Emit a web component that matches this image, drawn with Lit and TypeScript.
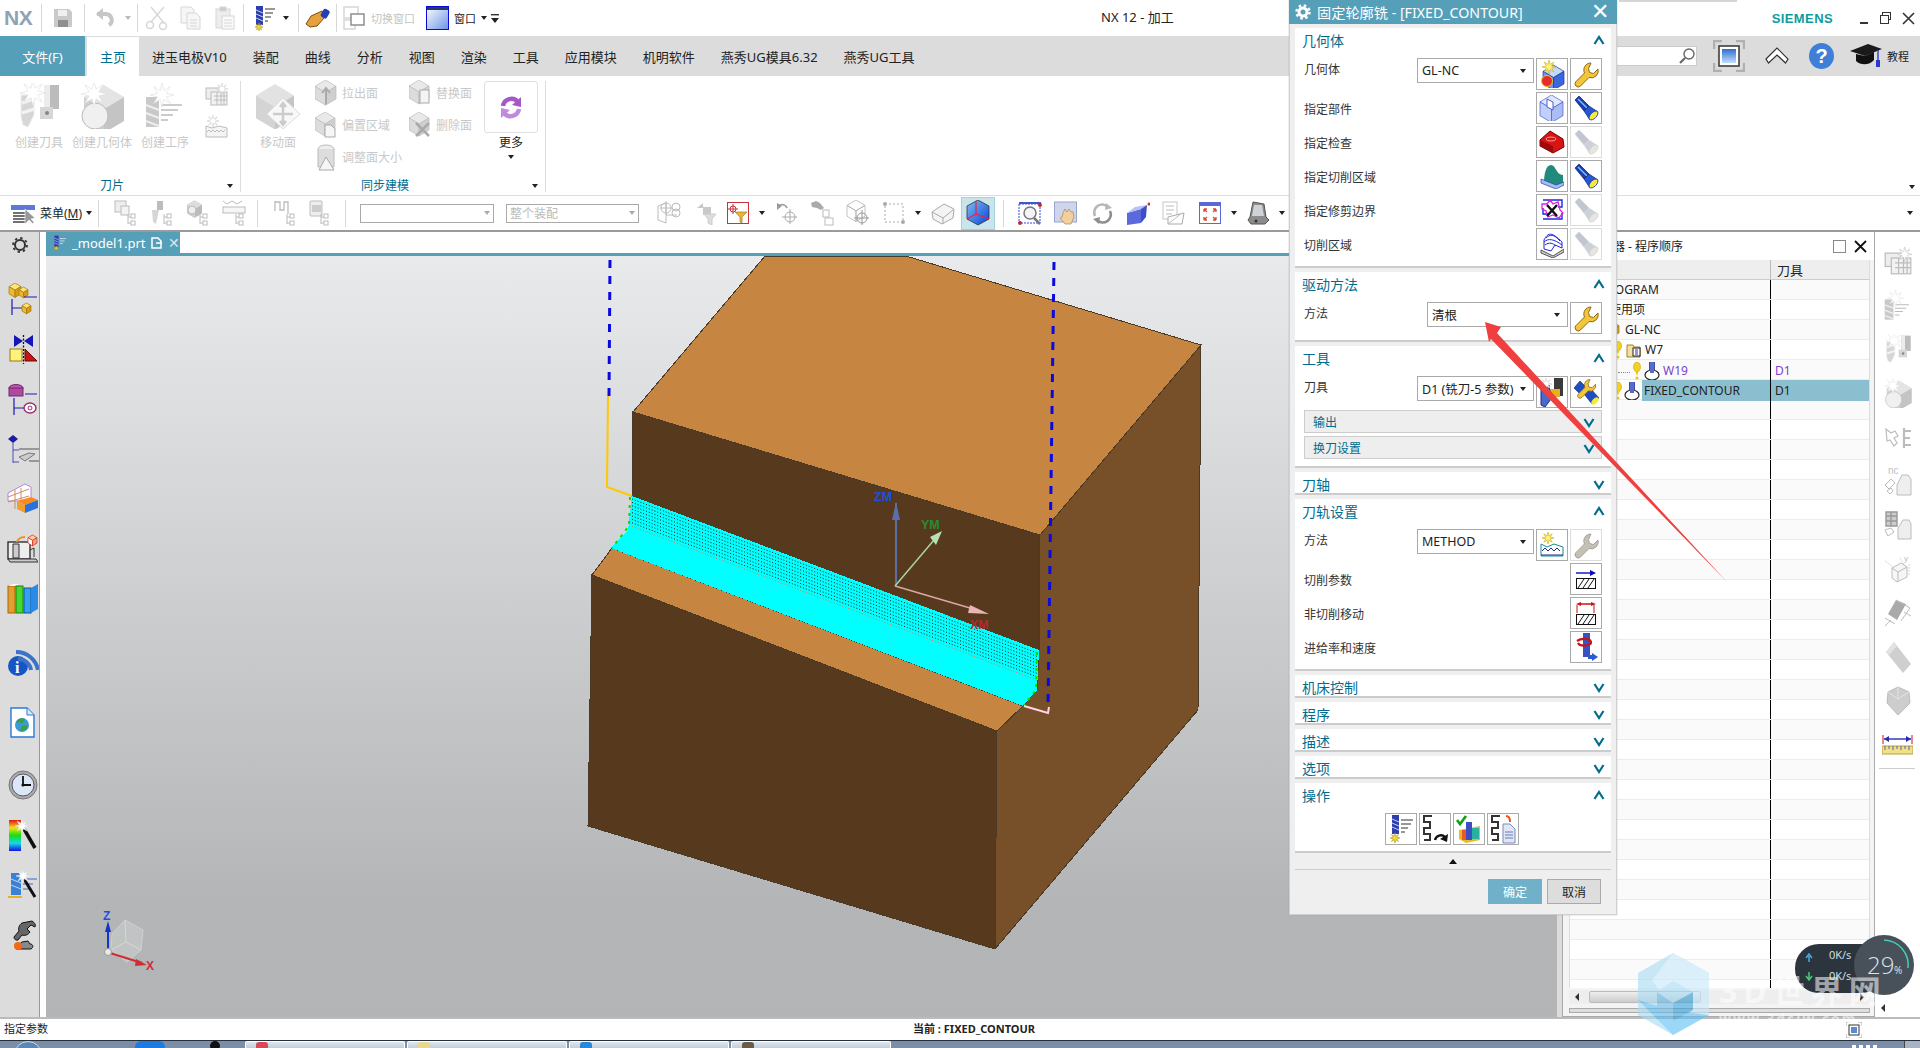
import { LitElement, html, svg, css } from "lit";
import { customElement } from "lit/decorators.js";

// small svg helpers, every icon is drawn in its own pixel box
const ic = (w: number, h: number, b: unknown) =>
  html`<svg width=${w} height=${h} viewBox="0 0 ${w} ${h}">${b}</svg>`;
const sc = (w: number, h: number, vw: number, vh: number, b: unknown) =>
  html`<svg width=${w} height=${h} viewBox="0 0 ${vw} ${vh}">${b}</svg>`;

const spark = (x: number, y: number, r: number, c = "#fff", st = "#ccc") => {
  const pts: string[] = [];
  for (let i = 0; i < 16; i++) {
    const a = (i * Math.PI) / 8;
    const q = i % 2 ? r * 0.4 : r;
    pts.push(`${(x + q * Math.cos(a)).toFixed(1)},${(y + q * Math.sin(a)).toFixed(1)}`);
  }
  return svg`<polygon points=${pts.join(" ")} fill=${c} stroke=${st} stroke-width="0.6"/>`;
};

const cube = (x: number, y: number, s: number, t: string, l: string, r: string, st = "none") => svg`
  <polygon points="${x},${y + s * 0.3} ${x + s * 0.5},${y} ${x + s},${y + s * 0.3} ${x + s * 0.5},${y + s * 0.6}" fill=${t} stroke=${st} stroke-width="0.7"/>
  <polygon points="${x},${y + s * 0.3} ${x + s * 0.5},${y + s * 0.6} ${x + s * 0.5},${y + s * 1.2} ${x},${y + s * 0.9}" fill=${l} stroke=${st} stroke-width="0.7"/>
  <polygon points="${x + s},${y + s * 0.3} ${x + s * 0.5},${y + s * 0.6} ${x + s * 0.5},${y + s * 1.2} ${x + s},${y + s * 0.9}" fill=${r} stroke=${st} stroke-width="0.7"/>`;

const G1 = "#d6d6d6";
const G2 = "#bcbcbc";
const G3 = "#ececec";

const wrenchPath = "M18 2a7 7 0 0 0-6.5 10L3 20.5a3 3 0 0 0 4.5 4.5L16 16.5a7 7 0 0 0 9-8.5l-4.5 4.5-4-1-1-4z";
const wrench = (on: boolean) =>
  ic(26, 27, svg`<path d=${wrenchPath} fill=${on ? "#f2c53d" : "#c4c0b6"} stroke=${on ? "#8c6a12" : "#a5a29a"} stroke-width="1"/>`);

const flash = (on: boolean) =>
  ic(26, 26, svg`
    <polygon points="2,5 6,1 16,11 11,16" fill=${on ? "#1a3cb4" : "#c2c6d0"} stroke=${on ? "#0a1f6a" : "#d0d3da"} stroke-width="0.7"/>
    ${on ? svg`<path d="M5 4l9 9" stroke="#7cc4f8" stroke-width="1.4"/>` : null}
    <polygon points="11,16 16,11 25,17 17,25" fill=${on ? "#2458d8" : "#ccd0d8"} stroke=${on ? "#0a1f6a" : "#d8dade"} stroke-width="0.7"/>
    <ellipse cx="20.5" cy="20.5" rx="5.5" ry="3" transform="rotate(-45 20.5 20.5)" fill=${on ? "#f4ea3c" : "#e6e6de"} stroke=${on ? "#1a3aa0" : "#d4d4d0"} stroke-width="0.8"/>`);

const millMark = (c = "#2d3fae") => svg`
  <rect x="4" y="1" width="7" height="19" fill=${c}/>
  <path d="M4 5l7 3M4 9l7 3M4 13l7 3" stroke="#c7d2f2" stroke-width="1"/>`;

const opIcon = ic(24, 26, svg`${millMark()}
  <path d="M13 4h10M13 8h8M13 12h6M13 16h3" stroke="#777" stroke-width="1.3"/>
  ${spark(7, 22, 4, "#f4dc3a", "#b09a20")}`);

const caret = html`<i class="car"></i>`;

const mkGhostTree = (b: unknown) =>
  ic(24, 26, svg`${b}
    <path d="M14 14v10M14 17h3M14 23h3" stroke=${G2} fill="none"/>
    <rect x="17" y="14" width="4" height="4" fill="none" stroke=${G2}/><rect x="17" y="21" width="4" height="4" fill="none" stroke=${G2}/>`);

const bTool = svg`
  <path d="M4 12h13v20l-6 12-5-2-2-8z" fill=${G1} stroke="#efefef"/><path d="M5 20l12-4M5 30l12-4" stroke="#f4f4f4" stroke-width="3"/>
  <rect x="27" y="2" width="15" height="24" fill=${G2}/><rect x="27" y="2" width="6" height="24" fill=${G3}/><rect x="23" y="24" width="13" height="12" fill=${G1}/><circle cx="30" cy="30" r="2" fill="#888"/>
  ${spark(16, 10, 13, "#fff", "#ddd")}`;
const bGeom = svg`${cube(6, 2, 40, "#e4e4e4", "#d0d0d0", "#c4c4c4")}<circle cx="17" cy="33" r="13" fill="#f0f0f0" stroke="#bbb"/>${spark(16, 11, 13, "#fff", "#ddd")}`;
const bOp = svg`
  <rect x="1" y="14" width="13" height="30" fill="#c9c9c9"/><path d="M1 22l13 5M1 30l13 5M1 38l13 5" stroke="#eee" stroke-width="2"/>
  <path d="M16 22h21M16 27h17M16 32h12M16 37h7" stroke=${G2} stroke-width="1.5"/>${spark(17, 12, 12, "#fff", "#ddd")}`;
const bSmallOp = svg`<rect x="1" y="5" width="13" height="11" fill="#eee" stroke=${G2}/><rect x="6" y="9" width="16" height="13" fill="#f2f2f2" stroke=${G2}/><path d="M9 13h13M9 17h13M12 9v13M16 9v13M19 9v13" stroke=${G2}/>${spark(17, 6, 6, "#fff", "#ccc")}`;

const I = {
  save: ic(20, 20, svg`<path d="M1 1h15l3 3v15H1z" fill="#c9c9c9"/><rect x="5" y="2" width="9" height="6" fill="#efefef"/><rect x="5" y="12" width="10" height="7" fill="#8f8f8f"/>`),
  undo: ic(20, 20, svg`<path d="M2 6h9a6 6 0 0 1 3 11" fill="none" stroke="#c6c6c6" stroke-width="4"/><path d="M8 0v12L1 6z" fill="#c6c6c6"/>`),
  cut: ic(23, 24, svg`<path d="M19 1L6 16M6 1l13 16" stroke=${G1} fill="none" stroke-width="1.3"/><circle cx="5" cy="19" r="3.5" fill="none" stroke=${G1} stroke-width="1.5"/><circle cx="18" cy="20" r="3.5" fill="none" stroke=${G1} stroke-width="1.5"/>`),
  copy: ic(21, 24, svg`<path d="M1 1h10l3 3v13H1z" fill="#f6f6f6" stroke=${G1}/><path d="M7 7h9l4 4v12H7z" fill="#f6f6f6" stroke=${G1}/><path d="M10 14h7M10 17h7M10 20h7" stroke=${G1}/>`),
  paste: ic(20, 24, svg`<rect x="1" y="3" width="14" height="19" fill="#ededed" stroke=${G1}/><rect x="5" y="1" width="6" height="4" fill="#ccc" stroke=${G1}/><rect x="7" y="10" width="12" height="13" fill="#fafafa" stroke=${G1}/><path d="M9 14h8M9 17h8M9 20h8" stroke=${G1}/>`),
  hand: ic(26, 20, svg`<path d="M1 16l5-8 11-5 3 6-8 9-7 1z" fill="#e6a040" stroke="#7a5010"/><rect x="17" y="1" width="7" height="9" rx="2" transform="rotate(30 20 5)" fill="#2440b8"/>`),
  sw: ic(22, 24, svg`<rect x="1" y="1" width="14" height="11" fill="#fff" stroke=${G1} stroke-width="1.5"/><rect x="1" y="14" width="11" height="9" fill="#fff" stroke=${G1} stroke-width="1.5"/><rect x="8" y="8" width="13" height="11" fill="#fff" stroke="#8e8e8e" stroke-width="1.5"/>`),
  win: ic(23, 24, svg`<defs><linearGradient id="wg" x1="0" y1="0" x2="1" y2="1"><stop offset="0" stop-color="#fff"/><stop offset="1" stop-color="#6b93e6"/></linearGradient></defs><rect x="0.5" y="0.5" width="22" height="23" fill="url(#wg)" stroke="#0a0ad8"/><rect x="1" y="1" width="21" height="3" fill="#2a3a5c"/>`),
  qa: ic(8, 9, svg`<rect x="0" y="0" width="8" height="1.4" fill="#333"/><polygon points="0,4 8,4 4,9" fill="#222"/>`),
  createTool: ic(44, 46, bTool),
  createGeom: ic(48, 46, bGeom),
  createOp: ic(40, 46, bOp),
  smallOp: ic(23, 23, bSmallOp),
  smallMethod: ic(23, 23, svg`<path d="M1 11l6 2 7-2 8 2v9H1z" fill="#f4f4f4" stroke=${G2}/><path d="M2 17l2-2 2 2 2-2 2 2 2-2 2 2 2-2 2 2 2-2" stroke=${G2} fill="none"/>${spark(8, 6, 6, "#fff", "#ccc")}`),
  move: ic(44, 46, svg`${cube(0, 1, 38, "#e2e2e2", "#d4d4d4", "#c6c6c6")}<polygon points="27,15 44,31 27,46 11,31" fill="#f8f8f8" stroke="#ddd"/><path d="M27 20v22M17 31h20M24 24l3-4 3 4M24 38l3 4 3-4" stroke="#ccc" stroke-width="2.5" fill="none"/>`),
  pull: ic(22, 26, svg`${cube(0, 0, 21, "#e9e9e9", "#dcdcdc", "#cfcfcf", "#bbb")}<path d="M11 24V9M7 13l4-5 4 5" stroke="#aaa" stroke-width="2" fill="none"/>`),
  offset: ic(22, 26, svg`${cube(0, 0, 20, "#e9e9e9", "#dcdcdc", "#cfcfcf", "#bbb")}<path d="M10 13h6l4 4v8h-10z" fill="#f6f6f6" stroke="#aaa"/>`),
  resize: ic(20, 27, svg`<ellipse cx="10" cy="5" rx="8" ry="4" fill="#eee" stroke="#bbb"/><path d="M2 5v18h16V5" fill="#ddd" stroke="#bbb"/><polygon points="10,13 18,26 3,26" fill="#f6f6f6" stroke="#aaa"/>`),
  replace: ic(22, 26, svg`${cube(0, 0, 20, "#e9e9e9", "#dcdcdc", "#cfcfcf", "#bbb")}<rect x="11" y="10" width="9" height="13" fill="#f4f4f4" stroke="#aaa"/>`),
  del: ic(22, 26, svg`${cube(0, 0, 20, "#e9e9e9", "#dcdcdc", "#cfcfcf", "#bbb")}<path d="M7 11l13 13M20 11L7 24" stroke="#aaa" stroke-width="2.5"/>`),
  more: ic(22, 23, svg`<path d="M3 10a8.5 8.5 0 0 1 15-4" fill="none" stroke="#a658c8" stroke-width="4.5"/><polygon points="21,1 21,11 12,9" fill="#a658c8"/><path d="M19 13a8.5 8.5 0 0 1-15 4" fill="none" stroke="#c08adf" stroke-width="4.5"/><polygon points="1,22 1,12 10,14" fill="#c08adf"/>`),
  menu: ic(25, 22, svg`<rect x="0" y="3" width="24" height="5" fill="#5f79d8"/><path d="M2 11h16M2 14h14M2 17h14M2 20h14" stroke="#444" stroke-width="1.3"/><polygon points="14,7 14,22 18,18 22,22 23,20 20,17 24,16" fill="#999" stroke="#fff" stroke-width="0.6"/>`),
  t1: mkGhostTree(svg`<rect x="1" y="1" width="11" height="11" fill="#eee" stroke=${G2}/><rect x="7" y="6" width="8" height="9" fill="#f4f4f4" stroke=${G2}/>`),
  t2: mkGhostTree(svg`<rect x="7" y="1" width="6" height="9" fill=${G2}/><path d="M2 10l7 0-3 14-3-2z" fill=${G1}/>`),
  t3: mkGhostTree(svg`${cube(1, 0, 15, "#ddd", "#ccc", "#bbb")}<circle cx="6" cy="10" r="4" fill="#eee" stroke="#bbb"/>`),
  t4: mkGhostTree(svg`<path d="M1 1l4 3 5-3 5 3 5-3" fill="none" stroke=${G2}/><rect x="1" y="7" width="22" height="6" fill="#f6f6f6" stroke=${G2}/>`),
  t5: mkGhostTree(svg`<path d="M2 1v10M2 2h5v8h4V2h4v12" fill="none" stroke=${G2} stroke-width="1.3"/>`),
  t6: mkGhostTree(svg`<rect x="3" y="1" width="12" height="15" rx="1" fill="#eee" stroke=${G2}/><rect x="5" y="5" width="9" height="7" fill="#ccc"/>`),
  m1: ic(25, 26, svg`<path d="M1 6l8-3v20l-8-3z M9 15h11" fill="none" stroke=${G2}/><circle cx="9" cy="8" r="5" fill="none" stroke=${G2}/><circle cx="19" cy="7" r="4" fill="none" stroke=${G2}/><circle cx="19" cy="13" r="4" fill="none" stroke=${G2}/><path d="M9 1v14M3 8h12" stroke=${G2}/>`),
  m2: ic(23, 24, svg`<path d="M3 7l6-5v4h8v8H9V7z" fill="#c8c8c8"/><polygon points="10,13 22,13 18,18 18,24 14,22 14,18" fill="#ddd" stroke="#ccc"/>`),
  filter: ic(22, 22, svg`<rect x="0.5" y="0.5" width="21" height="21" fill="#fff" stroke="#c8333d"/><circle cx="6" cy="7" r="3" fill="none" stroke="#c8333d"/><path d="M6 2v10M1 7h10" stroke="#c8333d"/><polygon points="8,10 20,10 15,15 15,21 13,20 13,15" fill="#e8b43a" stroke="#9a7414" stroke-width="0.6"/>`),
  orient: ic(21, 24, svg`<path d="M2 6a5 5 0 0 1 9 1" fill="none" stroke="#999" stroke-width="1.5"/><polygon points="1,2 6,5 1,9" fill="#999"/><circle cx="14" cy="16" r="5" fill="none" stroke="#aaa"/><path d="M14 8v15M6 16h15" stroke="#aaa"/>`),
  tree7: ic(24, 26, svg`<path d="M1 3l5-2 4 2 4 5-3 2-4-2-5-1z" fill="#aaa"/><rect x="13" y="10" width="6" height="7" fill="none" stroke=${G2}/><rect x="15" y="18" width="8" height="7" fill="none" stroke=${G2}/>`),
  boxCross: ic(24, 26, svg`${cube(1, 0, 18, "none", "none", "none", "#aaa")}<circle cx="16" cy="18" r="5" fill="none" stroke="#999"/><path d="M16 10v15M8 18h15" stroke="#999"/>`),
  dashRect: ic(22, 22, svg`<rect x="2" y="2" width="18" height="18" fill="none" stroke="#aaa" stroke-dasharray="2 2"/><circle cx="2" cy="2" r="2" fill="#aaa"/><circle cx="20" cy="20" r="2" fill="#aaa"/>`),
  boxGrey: ic(24, 24, svg`<polygon points="1,11 13,3 23,8 22,17 11,23 2,18" fill="#f4f4f4" stroke="#aaa"/><path d="M1 11l11 6 10-8M12 17v6" fill="none" stroke="#aaa"/>`),
  wcs: ic(24, 26, svg`<defs><linearGradient id="bc" x1="0" y1="0" x2="1" y2="1"><stop offset="0" stop-color="#7cc0f4"/><stop offset="1" stop-color="#0b44d6"/></linearGradient></defs>
    <polygon points="1,6 12,0 23,6 23,19 12,25 1,19" fill="url(#bc)" stroke="#333" stroke-width="0.8"/><path d="M10 1v13l13 5M10 14l-9 5" fill="none" stroke="#e8224a" stroke-width="1.2"/>`),
  fit: ic(24, 24, svg`<rect x="1" y="1" width="22" height="4" fill="#4458c8"/><rect x="1" y="3" width="21" height="19" fill="#fff" stroke="#3a46e0" stroke-dasharray="2 1"/><circle cx="12" cy="12" r="6" fill="#f2f4f8" stroke="#777" stroke-width="1.5"/><path d="M16 17l6 6" stroke="#777" stroke-width="2.5"/><circle cx="2" cy="22" r="2" fill="#c82a2a"/><circle cx="22" cy="4" r="2" fill="#c82a2a"/>`),
  pan: ic(24, 25, svg`<rect x="0.5" y="1" width="22" height="20" fill="#cfd6ec" stroke="#9aa6cc"/><path d="M9 12l2-4 2 3 2-3 2 3 2 0 1 5-3 7h-6l-5-6 2-1z" fill="#f2cf9c" stroke="#9a7a4a" stroke-width="0.6"/>`),
  rotate: ic(23, 23, svg`<path d="M4 14a8 8 0 0 1 13-9" fill="none" stroke="#b8b8b8" stroke-width="2.6"/><path d="M19 9a8 8 0 0 1-13 9" fill="none" stroke="#8e8e8e" stroke-width="2.6"/><polygon points="15,1 21,6 14,8" fill="#b8b8b8"/><polygon points="8,22 2,17 9,15" fill="#8e8e8e"/>`),
  persp: ic(24, 24, svg`<polygon points="1,12 15,8 15,22 1,24" fill="#5a6adc"/><polygon points="1,12 9,6 21,4 15,8" fill="#b6c2f4"/><polygon points="15,8 21,4 20,16 15,22" fill="#3f4ec6"/><circle cx="23" cy="3" r="1.5" fill="#d42a2a"/>`),
  layers: ic(25, 24, svg`<rect x="1" y="1" width="14" height="17" fill="#fff" stroke="#c6c6c6"/><path d="M4 5h8M4 9h8M4 13h6" stroke="#bbb"/><polygon points="6,16 22,12 20,23 6,23" fill="#fff" stroke="#aaa"/><path d="M6 23l14-11" stroke="#bbb"/>`),
  full: ic(22, 22, svg`<rect x="0.5" y="0.5" width="21" height="21" fill="#fff" stroke="#5a68d8"/><rect x="1" y="1" width="20" height="3" fill="#5a68d8"/><path d="M5 7l3 3M5 7h3M5 7v3M17 7l-3 3M17 7h-3M17 7v3M5 18l3-3M5 18h3M5 18v-3M17 18l-3-3M17 18h-3M17 18v-3" stroke="#d84a30" stroke-width="1.3"/>`),
  shade: ic(22, 24, svg`<path d="M6 1l11 2 2 13 3 3-4 4H4l-3-4 2-3z" fill="#8c8c8c" stroke="#555"/><path d="M7 4h8l2 11H5z" fill="#cfd2d6"/><circle cx="9" cy="20" r="1.5" fill="#333"/>`),
  gear: ic(18, 18, svg`<circle cx="9" cy="9" r="5" fill="none" stroke="#333" stroke-width="2"/><circle cx="9" cy="9" r="7" fill="none" stroke="#333" stroke-width="1.8" stroke-dasharray="2.4 3.1"/>`),
  gearW: ic(16, 16, svg`<circle cx="8" cy="8" r="4" fill="none" stroke="#fff" stroke-width="3"/><circle cx="8" cy="8" r="6.5" fill="none" stroke="#fff" stroke-width="2.5" stroke-dasharray="2.5 2.6"/>`),
  lb1: ic(30, 32, svg`${cube(1, 0, 12, "#ffe27a", "#f0b92a", "#d89a12", "#a07810")}${cube(11, 4, 9, "#ffe27a", "#f0b92a", "#d89a12", "#a07810")}<path d="M4 16v16M4 25h10M16 14h13" stroke="#1a1ab4" stroke-width="1.2"/>${cube(14, 20, 9, "#ffe27a", "#f0b92a", "#d89a12", "#a07810")}`),
  lb2: ic(28, 30, svg`<polygon points="5,1 14,7 5,13" fill="#1416b8"/><polygon points="24,1 15,7 24,13" fill="#1416b8"/><path d="M14.5 1v29" stroke="#111" stroke-dasharray="2 1.5" stroke-width="1.3"/><rect x="1" y="15" width="12" height="12" fill="#fff27a" stroke="#9a7a10"/><polygon points="16,15 28,27 16,27" fill="#c81414" stroke="#6a0a0a"/>`),
  lb3: ic(30, 31, svg`<ellipse cx="8" cy="4" rx="7" ry="3.5" fill="#c94fb0" stroke="#6a2a70"/><rect x="1" y="4" width="14" height="8" fill="#b04aa0" stroke="#6a2a70"/><path d="M6 14v17M6 24h10M17 10h12" stroke="#1a1ab4" stroke-width="1.2"/><ellipse cx="22" cy="24" rx="6" ry="5" fill="#fff" stroke="#9a2a72" stroke-width="1.4"/><circle cx="22" cy="24" r="2" fill="none" stroke="#9a2a72"/>`),
  lb4: ic(32, 30, svg`<polygon points="6,1 11,5 6,9 1,5" fill="#1c1ca0"/><path d="M6 9v20M6 16h6M6 28h6" stroke="#5050b0"/><path d="M12 15h20M22 27h10" stroke="#555"/><path d="M12 23l10-4 6 1-10 7z" fill="#ccc" stroke="#777"/>`),
  lb5: ic(32, 32, svg`<path d="M1 10L18 1l6 3v14H1z" fill="#fff" stroke="#b08ad8"/><path d="M1 14l21-8M1 19l21-6M8 7v19M14 5v14" stroke="#d08a6a"/><polygon points="10,18 24,14 31,17 18,22" fill="#f88a20"/><polygon points="10,18 18,22 18,30 10,26" fill="#f0a030"/><polygon points="18,22 31,17 31,25 18,30" fill="#2a72d8"/>`),
  lb6: ic(31, 30, svg`<rect x="1" y="8" width="22" height="17" fill="#eee" stroke="#222" stroke-width="1.3"/><path d="M6 10h6v14H6zM1 25h28l2 3H3z" fill="#ccc" stroke="#333"/><path d="M23 16l4-2v9" stroke="#333" fill="none"/><path d="M10 8a8 6 0 0 1 8-5" stroke="#f28a20" stroke-width="2" fill="none"/>${cube(21, 1, 9, "#ffd0a0", "#fff", "#f4a080", "#d82a1a")}`),
  lb7: ic(32, 30, svg`<rect x="1" y="2" width="7" height="27" fill="#e0a030" stroke="#b06010"/><polygon points="1,2 6,0 12,0 8,2" fill="#fff"/><rect x="9" y="2" width="7" height="27" fill="#44d830" stroke="#1a8010"/><rect x="17" y="4" width="7" height="25" fill="#38a0f0" stroke="#1050a0"/><polygon points="24,4 31,0 31,25 24,29" fill="#2a8ae8"/>`),
  lb8: ic(32, 33, svg`<ellipse cx="11" cy="22" rx="10" ry="10" fill="#1556c4"/><text x="8" y="29" font-size="16" font-weight="700" fill="#fff" font-family="Liberation Serif">i</text><path d="M9 8a22 22 0 0 1 22 18" stroke="#3b73c8" stroke-width="4" fill="none"/><path d="M11 15a13 13 0 0 1 13 11" stroke="#3b73c8" stroke-width="4" fill="none"/>`),
  lb9: ic(25, 31, svg`<path d="M1 1h16l7 7v22H1z" fill="#fff" stroke="#2a7ad8" stroke-width="1.4"/><path d="M17 1v7h7" fill="#d8e8f8" stroke="#2a7ad8"/><circle cx="12" cy="18" r="7" fill="#3c9ad4"/><path d="M6 15a7 7 0 0 1 9-3l-2 4zM18 18a7 7 0 0 1-8 6l2-5z" fill="#38a048"/>`),
  lb10: ic(30, 30, svg`<circle cx="15" cy="15" r="14" fill="#aaa" stroke="#777"/><circle cx="15" cy="15" r="11" fill="#dbe6f6" stroke="#556"/><path d="M15 6v9h8" stroke="#111" stroke-width="1.8" fill="none"/><circle cx="15" cy="15" r="1.6" fill="#111"/>`),
  lb11: ic(30, 32, svg`<defs><linearGradient id="rb" x1="0" y1="0" x2="0" y2="1"><stop offset="0" stop-color="#e01414"/><stop offset="0.25" stop-color="#f4e014"/><stop offset="0.5" stop-color="#14e014"/><stop offset="0.75" stop-color="#14d8e8"/><stop offset="1" stop-color="#1414e0"/></linearGradient></defs><rect x="1" y="1" width="12" height="31" fill="url(#rb)"/><path d="M16 10l11 19" stroke="#111" stroke-width="3.5"/>${spark(14, 7, 7, "#fff", "#ddd")}`),
  lb12: ic(32, 28, svg`<rect x="4" y="2" width="10" height="22" fill="#3a82d8"/><path d="M4 8l10 4M4 14l10 4" stroke="#bcd6f4"/><path d="M16 8h14M16 13h10M16 18h6" stroke="#3a6ac0" stroke-width="1.2"/><path d="M17 8l11 18" stroke="#111" stroke-width="3"/>${spark(16, 5, 7, "#fff", "#ddd")}<path d="M1 26h14" stroke="#e8b020" stroke-width="2"/>`),
  lb13: ic(30, 31, svg`<path d="M24 1c3 2 4 4 3 6l-4-2-4 4 3 3c-2 3-5 4-8 3l-4 5a3 3 0 0 1-4-3l5-6c-1-3 0-6 3-8z" fill="#666" stroke="#111"/><path d="M14 22l6-1 2 3c3 0 4 3 1 5H8l1-3z" fill="#888" stroke="#111"/><circle cx="10" cy="26" r="4" fill="#f26a14"/>`),
  geomBtn: ic(26, 28, svg`${cube(4, 5, 21, "#c6d8fa", "#6a98ec", "#3a68dc", "#1a3a90")}<circle cx="8" cy="21" r="5.5" fill="#e82a2a" stroke="#e8c020"/>${spark(10, 7, 7, "#fff27a", "#c8a818")}`),
  part: ic(26, 26, svg`${cube(1, 0, 23, "#e0e8ff", "#c0cffb", "#a9bcf4", "#4a5ad0")}<path d="M8 4l6 3v8l-6-3z" fill="#fff" stroke="#4a5ad0"/>`),
  check: ic(26, 24, svg`<polygon points="1,10 11,1 24,9 25,17 14,23 1,16" fill="#d81414" stroke="#6a0808"/><polygon points="1,10 14,16 14,23 1,16" fill="#a00a0a"/><ellipse cx="12" cy="9" rx="5" ry="2" fill="none" stroke="#ff9a9a"/>`),
  cutArea: ic(24, 26, svg`<path d="M4 20c0-9 2-18 7-18s5 10 12 10v10l-7 3z" fill="#208a7c"/><path d="M1 16l15 6 8-3v3l-8 4-15-6z" fill="#a8bcf4" stroke="#2a3ea8" stroke-width="0.7"/>`),
  trim: ic(24, 26, svg`<path d="M3 3h19v7h-4M3 22h19v-6M3 11v6h6" fill="none" stroke="#1c2ad8" stroke-width="1.4"/><path d="M2 7h5l3-4 3 4 5-2 2 8 3 3-4 5-6-3-5 2-2-6-4-2z" fill="none" stroke="#e21ce2" stroke-width="1.3"/><path d="M7 8l10 11M17 8L7 19" stroke="#111" stroke-width="2.4"/>`),
  cutRegion: ic(24, 28, svg`<path d="M4 10c4-8 8-8 18 2v6l-7-3-4 6-7-2z" fill="#fff" stroke="#2424d8"/><path d="M6 8c4-4 8-4 14 3M4 12c4-4 10-3 18 3M5 15c4-3 8-2 11 1" stroke="#2424d8" fill="none"/><polygon points="1,20 13,26 24,19 24,22 13,28 1,23" fill="#ccc" stroke="#555"/>`),
  tool: ic(26, 30, svg`<rect x="15" y="1" width="9" height="18" fill="#3a3a3a"/><rect x="10" y="12" width="11" height="8" fill="#e8b020"/><path d="M2 8h8l2 14-6 8-4-2z" fill="#4a6ac8" stroke="#1a2a80"/>${spark(7, 7, 6, "#fff", "#ccc")}`),
  toolEdit: ic(28, 28, svg`<polygon points="2,10 8,3 14,9 7,15" fill="#1d4fc4" stroke="#0a1f6a" stroke-width="0.6"/><polygon points="12,16 18,10 27,20 20,26" fill="#1d4fc4" stroke="#0a1f6a" stroke-width="0.6"/><ellipse cx="23" cy="23" rx="4.5" ry="2.6" transform="rotate(-45 23 23)" fill="#f4ea3c"/><g transform="translate(4 0) scale(0.78)"><path d=${wrenchPath} fill="#f2c53d" stroke="#8c6a12"/></g>`),
  method: ic(26, 26, svg`<path d="M2 12l6 3 7-3 9 3v9H2z" fill="#fff" stroke="#1a8a9a"/><path d="M3 19l3-3 3 3 3-3 3 3 3-3 3 3" stroke="#1a2a80" fill="none"/><path d="M2 23h22" stroke="#1a2a80"/>${spark(9, 6, 6, "#fff27a", "#c8a818")}`),
  cutParam: ic(20, 20, svg`<path d="M0 4h18" stroke="#0a0ac0" stroke-width="1.4"/><polygon points="14,1 20,4 14,7" fill="#0a0ac0"/><rect x="0.5" y="9.5" width="19" height="10" fill="#fff" stroke="#111"/><path d="M2 19l6-9M7 19l6-9M12 19l6-9" stroke="#111"/>`),
  noCut: ic(20, 24, svg`<path d="M3 3h14" stroke="#c81414" stroke-width="1.5"/><polygon points="0,3 5,1 5,5" fill="#c81414"/><polygon points="20,3 15,1 15,5" fill="#c81414"/><path d="M1 4v8M18 4v8" stroke="#c81414"/><rect x="0.5" y="13.5" width="19" height="10" fill="#fff" stroke="#111"/><path d="M2 23l6-9M7 23l6-9M12 23l6-9" stroke="#111"/>`),
  feed: ic(24, 28, svg`<rect x="9" y="0" width="7" height="24" fill="#3a50c0"/><path d="M3 8c4-3 13-3 14 1s-11 5-13 1" fill="none" stroke="#c81414" stroke-width="2.2"/><path d="M14 24h6" stroke="#2a5ad8" stroke-width="4"/><polygon points="18,20 24,24 18,28" fill="#2a5ad8"/>`),
  gen: ic(26, 30, svg`${millMark()}<path d="M13 6h12M13 10h10M13 14h7M13 18h4" stroke="#777" stroke-width="1.3"/>${spark(7, 24, 5, "#f4dc3a", "#b09a20")}`),
  replay: ic(28, 30, svg`<path d="M11 2H3v6h6v6H3v6h6v6H3" fill="none" stroke="#333" stroke-width="2"/><path d="M14 26a6 6 0 0 1 10-3" fill="none" stroke="#111" stroke-width="2.4"/><polygon points="27,20 26,28 19,25" fill="#111"/>`),
  verify: ic(26, 30, svg`<polygon points="3,16 24,12 24,26 10,29 3,25" fill="#f0b820"/><rect x="10" y="8" width="6" height="18" fill="#3a50c0"/><rect x="16" y="14" width="7" height="11" fill="#28b0a0"/><rect x="6" y="16" width="4" height="10" fill="#e85a2a"/><path d="M1 6l3 4 6-8" stroke="#10a010" stroke-width="2.6" fill="none"/>`),
  list: ic(28, 30, svg`<path d="M11 2H3v6h6v6H3v6h6v6H3" fill="none" stroke="#333" stroke-width="2"/><path d="M14 10h7l5 5v14H14z" fill="#dfe6f6" stroke="#7a8ab8"/><path d="M16 18h8M16 21h8M16 24h8" stroke="#6a7ab0"/><path d="M17 2c3 0 4 3 4 6" stroke="#e8501a" stroke-width="2" fill="none"/>`),
  r1: sc(28, 28, 23, 23, bSmallOp),
  r2: sc(27, 31, 40, 46, bOp),
  r3: sc(28, 30, 44, 46, bTool),
  r4: sc(30, 29, 48, 46, bGeom),
  r5: ic(28, 25, svg`<path d="M2 4l5 4 4-2 3 5-4 2 3 5-3 3-4-6-3 1z" fill="none" stroke=${G2} stroke-width="1.2"/><path d="M20 3v20M20 6h7M20 13h6M20 20h7" stroke=${G2} stroke-width="2.2"/>`),
  r6: ic(28, 32, svg`<text x="4" y="9" font-size="10" fill="#c2c2c2" font-family="Liberation Sans">nc</text><path d="M1 20l6-6 4 4-6 6zM3 26l4-3 2 3-3 3z" fill="none" stroke=${G2}/><path d="M13 30V20l5-10h6l3 4v16z" fill="#eee" stroke=${G2}/>`),
  r7: ic(28, 30, svg`<path d="M2 2h11v14H2zM2 6h11M2 11h11M7 2v14" fill="#ccc" stroke="#999" stroke-width="1.4"/><path d="M1 20l6-2 3 4-6 4z" fill="none" stroke=${G2}/><path d="M14 29V18l5-8h6l2 4v15z" fill="#eee" stroke=${G2}/>`),
  r8: ic(28, 30, svg`<polygon points="8,14 17,9 23,13 23,23 13,28 8,24" fill="#f6f6f6" stroke=${G2}/><path d="M8 14l6 4 9-5M14 18v10" fill="none" stroke=${G2}/><path d="M1 7l8 6M16 4l4 6M25 10v12" stroke=${G1} stroke-dasharray="2 1"/><text x="20" y="7" font-size="8" fill="#bbb" font-family="Liberation Sans">y</text>`),
  r9: ic(28, 30, svg`<polygon points="4,16 12,2 22,6 13,22" fill="#aaa"/><path d="M12 2l14 8-9 13" fill="none" stroke=${G2}/><path d="M1 20l10 6M1 28l6-6M20 14l7 4" stroke=${G2}/>`),
  r10: ic(28, 34, svg`<polygon points="2,12 10,2 27,24 19,33" fill="#cfcfcf"/><polygon points="2,12 10,2 13,6 5,15" fill="#e2e2e2"/>`),
  r11: ic(26, 30, svg`<polygon points="13,1 24,6 25,17 13,29 2,17 3,6" fill="#cdcdcd" stroke="#bcbcbc"/><path d="M13 1v12M3 6l10 7 11-7" stroke="#e4e4e4" fill="none"/>`),
  ruler: ic(31, 20, svg`<path d="M1 0v9M30 0v9" stroke="#c81414"/><path d="M2 4h27" stroke="#2a2ab4" stroke-width="1.4"/><polygon points="2,4 7,1 7,7" fill="#2a2ab4"/><polygon points="29,4 24,1 24,7" fill="#2a2ab4"/><rect x="0" y="11" width="31" height="8" fill="#f0e08a" stroke="#b8a040"/><path d="M3 11v4M7 11v3M11 11v4M15 11v3M19 11v4M23 11v3M27 11v4" stroke="#6060a0"/>`),
  mag: ic(16, 16, svg`<circle cx="10" cy="6" r="5" fill="none" stroke="#666" stroke-width="1.4"/><path d="M6 10l-5 5" stroke="#666" stroke-width="2.2"/>`),
  fullscreen: ic(32, 32, svg`<path d="M1 9V1h8M23 1h8v8M31 23v8h-8M9 31H1v-8" fill="none" stroke="#b0b0b0" stroke-width="2.4"/><rect x="6" y="6" width="20" height="20" fill="#fff" stroke="#333" stroke-width="1.5"/><defs><linearGradient id="fs" x1="0" y1="0" x2="0" y2="1"><stop offset="0" stop-color="#2f6fd0"/><stop offset="1" stop-color="#bfe0fa"/></linearGradient></defs><rect x="9" y="9" width="14" height="14" fill="url(#fs)"/>`),
  chevUp: ic(26, 20, svg`<path d="M2 13L13 2l11 11-2.5 4L13 9l-8.5 8z" fill="#fff" stroke="#333" stroke-width="1.2"/>`),
  help: ic(25, 26, svg`<ellipse cx="12.5" cy="13" rx="12.5" ry="13" fill="#3f7fd8"/><text x="12.5" y="20" font-size="20" font-weight="700" text-anchor="middle" fill="#fff" font-family="Liberation Sans">?</text>`),
  cap: ic(32, 24, svg`<polygon points="0,7 18,0 32,5 15,12" fill="#1a1a1a"/><path d="M6 10v7c5 5 14 4 18-1V8l-9 4z" fill="#111"/><path d="M28 6v12" stroke="#2a3ad0" stroke-width="1.4"/><rect x="26" y="16" width="4" height="7" fill="#2a3ad0"/>`),
  folder: ic(15, 16, svg`<path d="M1 3h6l1 2h6v10H1z" fill="#f4e0a0" stroke="#a08030"/><rect x="7" y="6" width="7" height="8" fill="#fff" stroke="#222"/><path d="M9 8h3M9 10h3M9 12h3" stroke="#2a2ad0"/>`),
  excl: ic(8, 18, svg`<ellipse cx="4" cy="5" rx="3.5" ry="5" fill="#f2d21a" stroke="#b89a10" stroke-width="0.5"/><path d="M2.5 9l1.5 5 1.5-5z" fill="#e8c418"/><circle cx="4" cy="16" r="1.5" fill="#e8c418"/>`),
  opTree: ic(16, 18, svg`<rect x="5" y="0" width="6" height="9" fill="#3a50b0"/><path d="M1 13a7 5 0 1 1 14 0 7 5 0 0 1-14 0z" fill="#fff" stroke="#222" stroke-width="1.2"/><rect x="6" y="0" width="4" height="11" fill="#5a6ac8"/>`),
  geomTree: ic(14, 16, svg`${cube(0, 0, 12, "#ffe27a", "#f0c030", "#d8a012", "#8a6a10")}`),
};

@customElement("app-root")
export class AppRoot extends LitElement {
  static styles = css`
    :host {
      display: block;
      width: 1920px;
      height: 1048px;
      position: relative;
      overflow: hidden;
      background: #fff;
      font-family: "Noto Sans", "Noto Sans CJK SC", sans-serif;
      font-size: 12px;
      color: #222;
    }
    svg { display: block; flex: none; }
    .car { display: block; flex: none; width: 0; height: 0; border: 3px solid transparent; border-top: 4px solid #222; border-bottom: 0; }
    .sep { flex: none; width: 1px; background: #d8d8d8; }

    .title { height: 36px; display: flex; align-items: center; padding-left: 4px; }
    .nx { width: 32px; font: 700 21px "Liberation Sans", sans-serif; color: #8fa3b3; letter-spacing: -0.5px; }
    .title .sep { height: 28px; margin: 0 5px; }
    .tc { flex: none; display: flex; justify-content: center; align-items: center; }
    .ghost-txt { color: #c4c4c4; }
    .apptitle { position: absolute; left: 1101px; top: 7px; font-size: 13px; }
    .siemens { margin-left: auto; font: 700 13px "Liberation Sans", sans-serif; color: #0f9b9b; letter-spacing: 0.4px; }
    .winbtns { display: flex; align-items: center; gap: 10px; margin: 0 5px 0 26px; }

    .tabs { height: 40px; background: #dcdcdc; display: flex; align-items: center; font-size: 13px; }
    .file { width: 85px; height: 40px; background: #559fb9; color: #fff; display: flex; align-items: center; justify-content: center; margin-right: 2px; font-size: 13px; }
    .home { width: 52px; height: 39px; margin-top: 1px; background: #fff; color: #006d8f; display: flex; align-items: center; justify-content: center; margin-right: 0; }
    .tab { padding: 0 13px; white-space: nowrap; }
    .tabright { margin-left: auto; display: flex; align-items: center; padding-right: 11px; }
    .tabright span { margin-left: 5px; font-size: 11px; }
    .search { width: 140px; height: 20px; background: #fff; border: 1px solid #ccc; box-sizing: border-box; display: flex; justify-content: flex-end; align-items: center; padding-right: 1px; margin-right: 16px; }

    .ribbon { height: 120px; box-sizing: border-box; border-bottom: 1px solid #ddd; padding: 5px 0 3px; display: flex; }
    .rg { display: flex; flex-direction: column; border-right: 1px solid #ddd; flex: none; }
    .rg.a { width: 240px; }
    .rg.b { width: 304px; }
    .rc { flex: 1; display: flex; padding-top: 2px; }
    .rg.a .rc { padding-left: 9px; gap: 3px; }
    .rg.b .rc { padding-left: 7px; }
    .big { width: 60px; display: flex; flex-direction: column; align-items: center; color: #c8c8c8; }
    .big span { margin-top: 6px; line-height: 16px; white-space: nowrap; }
    .bicon { height: 46px; display: flex; align-items: center; }
    .scol { display: flex; flex-direction: column; gap: 6px; margin-top: -3px; }
    .scol.one { width: 94px; margin-left: 7px; }
    .scol.two { width: 75px; }
    .scol.rops { margin-left: 7px; gap: 9px; margin-top: 0; }
    .sm { display: flex; align-items: center; gap: 5px; height: 26px; color: #c8c8c8; white-space: nowrap; }
    .sm svg { width: 22px; }
    .morewrap { width: 54px; display: flex; flex-direction: column; align-items: center; margin-top: -2px; }
    .morebtn { width: 54px; height: 52px; box-sizing: border-box; border: 1px solid #e0e0e0; border-radius: 3px; display: flex; align-items: center; justify-content: center; }
    .morewrap span { margin-top: 2px; line-height: 16px; }
    .morewrap .car { margin-top: 4px; }
    .rf { height: 13px; display: flex; align-items: center; color: #006d8f; padding-right: 4px; line-height: 13px; }
    .rf span { flex: 1; text-align: center; }
    .rf .car { margin: 0 3px; }
    .edge { margin: auto 5px 3px auto; }

    .tbar { height: 36px; box-sizing: border-box; border-bottom: 2px solid #9a9a9a; display: flex; align-items: center; padding-left: 11px; }
    .mn { display: flex; align-items: center; gap: 4px; width: 73px; flex: none; }
    .mn u { text-decoration: underline; }
    .mn span { white-space: nowrap; }
    .tbar .sep { height: 27px; }
    .cell { flex: none; width: 36px; display: flex; justify-content: center; align-items: center; }
    .cell.n { width: 34px; }
    .acell { flex: none; width: 12px; display: flex; justify-content: center; }
    .sel { flex: none; height: 19px; box-sizing: border-box; border: 1px solid #aaa; background: #fff; display: flex; align-items: center; justify-content: space-between; color: #bbb; padding: 0 3px; }
    .sel .car { border-top-color: #aaa; }
    .hl { flex: none; width: 34px; height: 33px; box-sizing: border-box; background: #c8e4ec; border: 1px solid #a8d0dc; display: flex; justify-content: center; align-items: center; }
    .tbar .edge { margin: 0 7px 0 auto; }

    .main { height: 785px; display: flex; }
    .lbar { flex: none; width: 39px; box-sizing: content-box; border-right: 1px solid #999; background: #dcdcdc; display: flex; flex-direction: column; }
    .lgear { height: 42px; display: flex; justify-content: center; padding-top: 4px; box-sizing: border-box; }
    .lc { height: 50px; display: flex; justify-content: center; align-items: center; padding-left: 6px; }
    .lc.g1 { margin-top: 11px; }
    .lc.g2 { margin-top: 12px; }
    .lc.g3 { margin-top: 13px; }
    .center { flex: none; width: 1511px; margin-left: 6px; display: flex; flex-direction: column; }
    .doctabs { height: 21px; flex: none; }
    .doctab { width: 134px; height: 21px; background: #559fb9; color: #fff; display: flex; align-items: center; padding-left: 6px; box-sizing: border-box; gap: 6px; font-size: 13px; }
    .doctab b { font-weight: 400; color: #dbe6ea; font-size: 14px; }
    .tline { height: 3px; background: #559fb9; flex: none; }
    .view { flex: 1; min-height: 0; }
    .gutter { flex: none; width: 5px; background: #dcdcdc; }

    .nav { flex: none; width: 313px; box-sizing: border-box; border: 1px solid #aaa; border-top: 0; padding: 0 4px 2px 6px; display: flex; flex-direction: column; background: #f4f4f4; }
    .navh { height: 28px; flex: none; display: flex; align-items: center; justify-content: flex-end; padding-right: 7px; gap: 8px; background: #fff; margin: 0 -4px 0 -6px; padding-left: 2px; }
    .navh span { margin-right: auto; white-space: nowrap; }
    .sq { width: 11px; height: 11px; border: 1px solid #888; }
    .tbl { height: 728px; flex: none; overflow: hidden; background: #fff; border: 1px solid #ddd; border-width: 0 1px; }
    .colh { height: 20px; display: grid; grid-template-columns: 200px 100px; background: #eee; border-bottom: 1px solid #ccc; box-sizing: border-box; }
    .colh div + div { border-left: 1px solid #bbb; padding-left: 6px; line-height: 20px; font-size: 13px; }
    .row { height: 20px; box-sizing: border-box; display: grid; grid-template-columns: 200px 100px; border-bottom: 1px solid #ececec; font-size: 12px; white-space: nowrap; }
    .row:nth-child(even) { background: #fafafa; }
    .row .a { display: flex; align-items: center; gap: 4px; overflow: hidden; }
    .row .b { border-left: 1px solid #000; padding-left: 4px; line-height: 21px; }
    .row .t { line-height: 21px; }
    .row.pur .a { gap: 3px; }
    .row.sel2 .a { gap: 2px; }
    .row.sel2 .t { flex: 1; background: #8bbfd0; align-self: stretch; padding-left: 2px; }
    .row.sel2 .b { background: #8bbfd0; }
    .row.pur { color: #7a3fd0; }
    .dots { width: 12px; border-bottom: 1px dotted #888; margin-top: 4px; }
    .hs { height: 14px; margin-top: 2px; flex: none; background: #eee; display: flex; align-items: center; padding: 0 6px; gap: 6px; }
    .thumb { width: 112px; height: 12px; box-sizing: border-box; border: 1px solid #bbb; border-radius: 2px; background: linear-gradient(#eee, #ccc); margin-left: 4px; }
    .lt { width: 0; height: 0; border: 4px solid transparent; border-right: 4px solid #333; border-left: 0; }
    .rt { width: 0; height: 0; border: 4px solid transparent; border-left: 4px solid #333; border-right: 0; margin-left: auto; }
    .hbar { height: 5px; margin-top: 4px; flex: none; background: #ddd; border: 1px solid #aaa; box-sizing: border-box; }

    .rail { flex: none; width: 45px; padding-top: 7px; display: flex; flex-direction: column; position: relative; box-sizing: border-box; }
    .rc2 { height: 44px; display: flex; justify-content: center; align-items: center; }
    .rline { height: 1px; background: #ccc; margin: 1px 2px 0 4px; width: 36px; }
    .rarrow { margin-top: auto; margin-left: 6px; margin-bottom: 5px; }

    .status { height: 23px; box-sizing: border-box; border-top: 2px solid #bbb; display: flex; align-items: center; font-size: 11px; padding: 0 58px 3px 4px; color: #222; }
    .status .l { width: 909px; }
    .status b { font-weight: 700; }
    .status svg { margin-left: auto; margin-top: 3px; }
    .task { height: 8px; background: #7b8ea8; border-top: 1px solid #25303c; box-sizing: border-box; display: flex; overflow: hidden; }
    .orb { width: 28px; height: 28px; border-radius: 50%; border: 1px solid #cde; background: #5a86b8; margin-left: 14px; box-sizing: border-box; }
    .tdot { width: 30px; height: 20px; border-radius: 6px; background: #1e7ae0; margin-left: 93px; }
    .tk { width: 10px; height: 10px; border-radius: 50%; background: #111; margin-left: 45px; margin-right: 25px; }
    .tb { width: 160px; margin-right: 2px; background: linear-gradient(#dfe5ec, #c4ced9); border: 1px solid #fff; border-bottom: 0; box-sizing: border-box; border-radius: 2px 2px 0 0; padding-left: 10px; }
    .tb i { display: block; width: 12px; height: 12px; border-radius: 3px; }
    .clock { margin: 4px 25px 0 auto; width: 27px; height: 3px; background: repeating-linear-gradient(90deg, #fff 0 4px, transparent 4px 7px); }
    .desk { width: 15px; background: #a8b4c4; border-left: 1px solid #444; }

    .dlg { position: absolute; left: 1289px; top: 0; width: 328px; height: 915px; box-sizing: border-box; background: #efefef; border: 1px solid #d0d0d0; border-top: 0; display: flex; flex-direction: column; box-shadow: 0 0 1px #999; }
    .dh { height: 24px; flex: none; background: #559fb9; color: #fff; display: flex; align-items: center; padding: 0 8px 0 6px; margin: 0 -1px; gap: 6px; font-size: 14.2px; white-space: nowrap; }
    .dh .x { margin-left: auto; font: 400 22px "Liberation Sans", sans-serif; line-height: 22px; }
    .db { padding: 4px 5px 0; flex: 1; display: flex; flex-direction: column; gap: 4px; }
    .sec { background: #fff; border-bottom: 2px solid #ccc; box-sizing: border-box; padding: 0 9px 4px; }
    .sh { display: flex; justify-content: space-between; align-items: center; height: 24px; color: #006d8f; font-size: 14px; margin: 0 -4px 0 -2px; }
    .sec.col { padding: 2px 9px 0; }
    .sec.col .sh { height: 19px; }
    .sec.open .sb { padding-top: 6px; }
    .r { display: flex; height: 34px; align-items: flex-start; gap: 2px; }
    .r .lab { flex: 1; padding-top: 9px; line-height: 18px; color: #333; white-space: nowrap; }
    .r.sel0 .lab { padding-top: 3px; }
    .dsel { flex: none; width: 117px; height: 25px; box-sizing: border-box; border: 1px solid #aaa; display: flex; align-items: center; justify-content: space-between; padding: 0 7px 0 4px; font-size: 12.5px; white-space: nowrap; }
    .dsel.w { width: 141px; }
    .ib { flex: none; width: 32px; height: 32px; box-sizing: border-box; border: 1px solid #aaa; background: #fff; display: flex; justify-content: center; align-items: center; }
    .ib.off { border-color: #ddd; }
    .sub { height: 23px; box-sizing: border-box; border: 1px solid #ccc; background: #eee; color: #006d8f; display: flex; align-items: center; justify-content: space-between; padding: 0 4px 0 8px; margin-bottom: 3px; font-size: 12px; }
    .ops { display: flex; justify-content: center; gap: 2px; padding-right: 3px; height: 34px; }
    .tri { height: 17px; flex: none; display: flex; justify-content: center; align-items: center; border-bottom: 1px solid #ccc; margin: -4px 0 0; box-sizing: border-box; }
    .tri i { width: 0; height: 0; border: 4px solid transparent; border-bottom: 5px solid #111; border-top: 0; }
    .ft { display: flex; justify-content: flex-end; gap: 5px; padding: 5px 10px 0 0; }
    .btn { width: 54px; height: 25px; box-sizing: border-box; display: flex; justify-content: center; align-items: center; background: #ddd; border: 1px solid #aaa; }
    .btn.ok { background: #70b0c8; border-color: #70b0c8; color: #fff; }
    .over { position: absolute; left: 0; top: 0; pointer-events: none; }
  `;

  private scene() {
    const rows = [0, 1, 2, 3, 4, 5, 6, 7, 8];
    return html`<svg class="view" width="1511" height="761" viewBox="46 256 1511 761">
      <defs>
        <linearGradient id="vg" x1="0" y1="0" x2="0" y2="1">
          <stop offset="0" stop-color="#e8eaeb"/>
          <stop offset="0.85" stop-color="#b4b5b7"/>
          <stop offset="1" stop-color="#b3b4b6"/>
        </linearGradient>
      </defs>
      <rect x="46" y="256" width="1511" height="761" fill="url(#vg)"/>
      <g shape-rendering="crispEdges" stroke="#4a3a28" stroke-width="1">
        <polygon points="1201,345 1198,710 995,949 995,731 1023,706 1037,690 1039,650 1040,535" fill="#775029"/>
        <polygon points="765,256 906,256 1201,345 1040,535 633,412" fill="#c68642"/>
        <polygon points="633,412 1040,535 1039,652 632,497" fill="#573a1e"/>
        <polygon points="592,575 997,730 995,949 588,826" fill="#573a1e"/>
        <polygon points="612,548 1023,706 997,731 592,575" fill="#c68642"/>
      </g>
      <polygon points="632,496 1039,650 1037,690 1023,706 611,548 628,530" fill="#00ffff" shape-rendering="crispEdges"/>
      ${rows.map((i) => svg`<line x1="632" y1=${499 + i * 3.4} x2="1037" y2=${653 + i * 3.4} stroke=${i === 8 ? "#c68642" : "#1a1a10"} stroke-width="1" stroke-dasharray="1 2"/>`)}
      <polyline points="630,497 629,526 612,548" fill="none" stroke="#00e000" stroke-width="2" stroke-dasharray="3 5"/>
      <polyline points="1037,652 1036,690 1024,705" fill="none" stroke="#00e000" stroke-width="2" stroke-dasharray="3 5"/>
      <line x1="610" y1="260" x2="609" y2="396" stroke="#0a0ae0" stroke-width="3" stroke-dasharray="8 8"/>
      <polyline points="608,396 607,487 632,496" fill="none" stroke="#ffc800" stroke-width="2"/>
      <line x1="1054" y1="262" x2="1048" y2="708" stroke="#0a0ae0" stroke-width="3" stroke-dasharray="8 8"/>
      <polyline points="1024,706 1048,713 1049,707" fill="none" stroke="#ffd4e4" stroke-width="2"/>
      <line x1="896" y1="586" x2="896" y2="503" stroke="#5a6fa8" stroke-width="2"/>
      <polygon points="896,502 892,520 900,520" fill="#5a6fa8"/>
      <line x1="895" y1="586" x2="934" y2="540" stroke="#a8d5a0" stroke-width="1.5"/>
      <polygon points="942,531 930,537 936,545" fill="#b8e0b0"/>
      <line x1="895" y1="586" x2="970" y2="608" stroke="#d8a8a8" stroke-width="1.5"/>
      <polygon points="989,614 970,605 968,613" fill="#e8b4b4"/>
      <g font-family="Liberation Sans" font-weight="700" font-size="12.5">
        <text x="874" y="501" fill="#1a4fe0">ZM</text>
        <text x="921" y="529" fill="#2a8a30">YM</text>
        <text x="970" y="629" fill="#b02c2c">XM</text>
      </g>
      <polygon points="112,934 125,920 143,930 141,950 127,962 111,950" fill="#c8c9ca" fill-opacity="0.7" stroke="#d0d1d2"/>
      <path d="M125 920l1 22 15 8M126 942l-15 8" fill="none" stroke="#d8d8d8"/>
      <line x1="108" y1="952" x2="124" y2="934" stroke="#b4ccb0" stroke-width="1.5"/>
      <line x1="108" y1="951" x2="108" y2="925" stroke="#1436c8" stroke-width="2"/>
      <polygon points="108,921 105,932 111,932" fill="#1436c8"/>
      <line x1="110" y1="953" x2="142" y2="963" stroke="#d02c34" stroke-width="2"/>
      <polygon points="147,965 136,959 135,966" fill="#d02c34"/>
      <circle cx="108" cy="952" r="3.5" fill="#e8e8e8" stroke="#999"/>
      <g font-family="Liberation Sans" font-weight="700" font-size="12">
        <text x="103" y="920" fill="#1a4fe0">Z</text>
        <text x="146" y="970" fill="#d02c34">X</text>
      </g>
    </svg>`;
  }

  private dialog() {
    const sec = (name: string, open: boolean, body: unknown = null) => html`<div class="sec ${open ? "open" : "col"}">
      <div class="sh"><span>${name}</span>${this.chev(open)}</div>
      ${open ? html`<div class="sb">${body}</div>` : null}
    </div>`;
    const pick = (lab: string, a: unknown, b: unknown, off = true) => html`<div class="r">
      <div class="lab">${lab}</div>
      <div class="ib">${a}</div><div class="ib ${off ? "off" : ""}">${b}</div>
    </div>`;
    const one = (lab: string, a: unknown) => html`<div class="r"><div class="lab">${lab}</div><div class="ib">${a}</div></div>`;
    return html`<div class="dlg">
      <div class="dh">${I.gearW}<span>固定轮廓铣 - [FIXED_CONTOUR]</span><span class="x">✕</span></div>
      <div class="db">
        ${sec("几何体", true, html`
          <div class="r sel0"><div class="lab">几何体</div>
            <div class="dsel"><span>GL-NC</span>${caret}</div>
            <div class="ib">${I.geomBtn}</div><div class="ib">${wrench(true)}</div></div>
          ${pick("指定部件", I.part, flash(true), false)}
          ${pick("指定检查", I.check, flash(false))}
          ${pick("指定切削区域", I.cutArea, flash(true), false)}
          ${pick("指定修剪边界", I.trim, flash(false))}
          ${pick("切削区域", I.cutRegion, flash(false))}
        `)}
        ${sec("驱动方法", true, html`
          <div class="r sel0"><div class="lab">方法</div>
            <div class="dsel w"><span>清根</span>${caret}</div><div class="ib">${wrench(true)}</div></div>
        `)}
        ${sec("工具", true, html`
          <div class="r sel0"><div class="lab">刀具</div>
            <div class="dsel"><span>D1 (铣刀-5 参数)</span>${caret}</div>
            <div class="ib">${I.tool}</div><div class="ib">${I.toolEdit}</div></div>
          <div class="sub"><span>输出</span>${this.chev(false, 16)}</div>
          <div class="sub"><span>换刀设置</span>${this.chev(false, 16)}</div>
        `)}
        ${sec("刀轴", false)}
        ${sec("刀轨设置", true, html`
          <div class="r sel0"><div class="lab">方法</div>
            <div class="dsel"><span>METHOD</span>${caret}</div>
            <div class="ib">${I.method}</div><div class="ib off">${wrench(false)}</div></div>
          ${one("切削参数", I.cutParam)}
          ${one("非切削移动", I.noCut)}
          ${one("进给率和速度", I.feed)}
        `)}
        ${sec("机床控制", false)}
        ${sec("程序", false)}
        ${sec("描述", false)}
        ${sec("选项", false)}
        ${sec("操作", true, html`<div class="ops">
          <div class="ib">${I.gen}</div><div class="ib">${I.replay}</div><div class="ib">${I.verify}</div><div class="ib">${I.list}</div>
        </div>`)}
        <div class="tri"><i></i></div>
        <div class="ft"><div class="btn ok">确定</div><div class="btn">取消</div></div>
      </div>
    </div>`;
  }

  private chev(open: boolean, s = 14) {
    return ic(s, 12, svg`<path d=${open ? `M${s / 2 - 4.5} 10l4.5-7 4.5 7` : `M${s / 2 - 4.5} 3l4.5 7 4.5-7`} fill="none" stroke="#006d8f" stroke-width="2.2"/>`);
  }

  private tree() {
    const rows: { pad: number; icons?: unknown; text: string; tool?: string; cls?: string }[] = [
      { pad: 8, text: "NC_PROGRAM" },
      { pad: 27, text: "未使用项" },
      { pad: 37, icons: I.geomTree, text: "GL-NC" },
      { pad: 44, icons: html`${I.excl}${I.folder}`, text: "W7" },
      { pad: 48, icons: html`<div class="dots"></div>${I.excl}${I.opTree}`, text: "W19", tool: "D1", cls: "pur" },
      { pad: 44, icons: html`${I.excl}${I.opTree}`, text: "FIXED_CONTOUR", tool: "D1", cls: "sel2" },
    ];
    const blanks = Array.from({ length: 30 });
    return html`
      <div class="colh"><div></div><div>刀具</div></div>
      ${rows.map((r) => html`<div class="row ${r.cls ?? ""}">
        <div class="a" style="padding-left:${r.pad}px">${r.icons ?? null}<span class="t">${r.text}</span></div>
        <div class="b">${r.tool ?? ""}</div>
      </div>`)}
      ${blanks.map(() => html`<div class="row"><div class="a"></div><div class="b"></div></div>`)}
    `;
  }

  private overlay() {
    return html`<svg class="over" width="1920" height="1048" viewBox="0 0 1920 1048">
      <rect x="1619" y="0" width="118" height="2" fill="#bbb" opacity="0.6"/>
      <polygon points="1485,322 1501,327 1497,333 1728,583 1491,339 1489,342" fill="#ef3f3f"/>
      <g>
        <rect x="1795" y="944" width="90" height="49" rx="24" fill="#2c343e"/>
        <path d="M1809 962v-6M1806 958l3-4 3 4" stroke="#4aa8e8" stroke-width="1.5" fill="none"/>
        <path d="M1809 972v7M1806 976l3 4 3-4" stroke="#4ac878" stroke-width="1.5" fill="none"/>
        <circle cx="1884" cy="965" r="30" fill="#48505a"/>
        <path d="M1884 940a25 25 0 0 1 24 28" fill="none" stroke="#3ed0b0" stroke-width="1.5"/>
        <g font-family="Open Sans" fill="#dde4ea">
          <text x="1829" y="959" font-size="11">0K/s</text>
          <text x="1829" y="980" font-size="11">0K/s</text>
          <text x="1867" y="974" font-size="24" font-weight="300">29</text>
          <text x="1894" y="974" font-size="10">%</text>
        </g>
      </g>
      <g opacity="0.62">
        <polygon points="1673,953 1709,973 1709,1015 1673,1035 1638,1015 1638,973" fill="#a9dcf6"/>
        <polygon points="1673,953 1709,973 1709,1015 1686,1028 1652,980" fill="#c7e9fa"/>
        <polygon points="1638,1000 1673,1035 1709,1015 1670,1010" fill="#5fc0f4"/>
        <polygon points="1673,981 1693,992 1673,1003 1657,992" fill="#a8dcf4"/>
        <polygon points="1657,992 1673,1003 1673,1021 1657,1010" fill="#6cbde8"/>
        <polygon points="1693,992 1673,1003 1673,1021 1693,1010" fill="#3ea6de"/>
      </g>
      <g fill="#fff" opacity="0.55" font-family="Noto Sans, Noto Sans CJK SC" font-weight="700">
        <text x="1719" y="1003" font-size="32" letter-spacing="6">3D世界网</text>
        <text x="1719" y="1024" font-size="14" letter-spacing="2">www.3dsjw.com</text>
      </g>
    </svg>`;
  }

  render() {
    const tabs = ["进玉电极V10", "装配", "曲线", "分析", "视图", "渲染", "工具", "应用模块", "机明软件", "燕秀UG模具6.32", "燕秀UG工具"];
    const left = [
      [I.lb1, ""], [I.lb2, ""], [I.lb3, ""], [I.lb4, ""], [I.lb5, ""], [I.lb6, ""], [I.lb7, ""],
      [I.lb8, "g1"], [I.lb9, "g2"], [I.lb10, "g3"], [I.lb11, ""], [I.lb12, ""], [I.lb13, ""],
    ] as const;
    const rail = [I.r1, I.r2, I.r3, I.r4, I.r5, I.r6, I.r7, I.r8, I.r9, I.r10, I.r11, I.ruler];
    return html`
      <div class="title">
        <div class="nx">NX</div><div class="sep"></div>
        <div class="tc" style="width:32px">${I.save}</div>
        <div class="sep"></div>
        <div class="tc" style="width:30px">${I.undo}</div>
        <div class="tc" style="width:8px;margin-left:4px"><i class="car" style="border-top-color:#bbb"></i></div>
        <div class="sep"></div>
        <div class="tc" style="width:26px">${I.cut}</div>
        <div class="tc" style="width:42px">${I.copy}</div>
        <div class="tc" style="width:27px">${I.paste}</div>
        <div class="sep"></div>
        <div class="tc" style="width:30px">${opIcon}</div>
        <div class="tc" style="width:14px">${caret}</div>
        <div class="sep"></div>
        <div class="tc" style="width:27px">${I.hand}</div>
        <div class="sep"></div>
        <div class="tc" style="width:24px">${I.sw}</div>
        <div class="tc ghost-txt" style="width:54px;font-size:11px">切换窗口</div>
        <div class="tc" style="width:35px">${I.win}</div>
        <div class="tc" style="width:20px;font-size:11px;white-space:nowrap">窗口</div>
        <div class="tc" style="width:6px;margin-left:6px">${caret}</div>
        <div class="tc" style="width:16px">${I.qa}</div>
        <div class="apptitle">NX 12 - 加工</div>
        <div class="siemens">SIEMENS</div>
        <div class="winbtns">
          ${ic(10, 14, svg`<rect x="1" y="11" width="8" height="2" fill="#333"/>`)}
          ${ic(13, 14, svg`<rect x="3.5" y="1.5" width="8" height="7" fill="none" stroke="#333"/><rect x="1.5" y="4.5" width="8" height="8" fill="#fff" stroke="#333"/>`)}
          ${ic(13, 13, svg`<path d="M1 1l11 11M12 1L1 12" stroke="#333" stroke-width="1.6"/>`)}
        </div>
      </div>

      <div class="tabs">
        <div class="file">文件(F)</div>
        <div class="home">主页</div>
        ${tabs.map((t) => html`<div class="tab">${t}</div>`)}
        <div class="tabright">
          <div class="search">${I.mag}</div>
          ${I.fullscreen}
          <div class="tc" style="width:64px">${I.chevUp}</div>
          ${I.help}
          <div class="tc" style="width:48px;justify-content:flex-end">${I.cap}</div>
          <span>教程</span>
        </div>
      </div>

      <div class="ribbon">
        <div class="rg a">
          <div class="rc">
            <div class="big"><div class="bicon">${I.createTool}</div><span>创建刀具</span></div>
            <div class="big"><div class="bicon">${I.createGeom}</div><span>创建几何体</span></div>
            <div class="big"><div class="bicon">${I.createOp}</div><span>创建工序</span></div>
            <div class="scol rops"><div>${I.smallOp}</div><div>${I.smallMethod}</div></div>
          </div>
          <div class="rf"><span>刀片</span>${caret}</div>
        </div>
        <div class="rg b">
          <div class="rc">
            <div class="big"><div class="bicon">${I.move}</div><span>移动面</span></div>
            <div class="scol one">
              <div class="sm">${I.pull}<span>拉出面</span></div>
              <div class="sm">${I.offset}<span>偏置区域</span></div>
              <div class="sm">${I.resize}<span>调整面大小</span></div>
            </div>
            <div class="scol two">
              <div class="sm">${I.replace}<span>替换面</span></div>
              <div class="sm">${I.del}<span>删除面</span></div>
            </div>
            <div class="morewrap"><div class="morebtn">${I.more}</div><span>更多</span>${caret}</div>
          </div>
          <div class="rf"><span>同步建模</span>${caret}</div>
        </div>
        <div class="edge">${caret}</div>
      </div>

      <div class="tbar">
        <div class="mn">${I.menu}<span>菜单(<u>M</u>)</span></div>
        <div class="tc" style="width:9px;margin-right:5px">${caret}</div>
        <div class="sep"></div>
        <div style="width:9px"></div>
        <div class="cell">${I.t1}</div><div class="cell">${I.t2}</div><div class="cell">${I.t3}</div><div class="cell">${I.t4}</div>
        <div style="width:5px"></div>
        <div class="sep"></div>
        <div style="width:10px"></div>
        <div class="cell n">${I.t5}</div><div class="cell n">${I.t6}</div>
        <div style="width:9px"></div>
        <div class="sep"></div>
        <div style="width:14px"></div>
        <div class="sel" style="width:134px"><span></span>${caret}</div>
        <div style="width:12px"></div>
        <div class="sel" style="width:133px"><span>整个装配</span>${caret}</div>
        <div style="width:12px"></div>
        <div class="cell">${I.m1}</div><div class="cell">${I.m2}</div>
        <div class="cell" style="margin-left:-3px">${I.filter}</div>
        <div class="acell">${caret}</div>
        <div class="cell">${I.orient}</div><div class="cell">${I.tree7}</div><div class="cell">${I.boxCross}</div><div class="cell">${I.dashRect}</div>
        <div class="acell">${caret}</div>
        <div class="cell" style="margin-left:1px">${I.boxGrey}</div>
        <div class="hl">${I.wcs}</div>
        <div class="sep" style="margin:0 8px"></div>
        <div class="cell">${I.fit}</div><div class="cell">${I.pan}</div><div class="cell">${I.rotate}</div><div class="cell">${I.persp}</div><div class="cell">${I.layers}</div><div class="cell">${I.full}</div>
        <div class="acell">${caret}</div>
        <div class="cell">${I.shade}</div>
        <div class="acell">${caret}</div>
        <div class="edge">${caret}</div>
      </div>

      <div class="main">
        <div class="lbar">
          <div class="lgear">${I.gear}</div>
          ${left.map(([icon, cls]) => html`<div class="lc ${cls}">${icon}</div>`)}
        </div>
        <div class="center">
          <div class="doctabs"><div class="doctab">${ic(14, 16, svg`<g transform="scale(0.6)">${millMark()}<path d="M13 6h10M13 10h8M13 14h5" stroke="#ddd" stroke-width="1.5"/>${spark(7, 22, 4, "#f4dc3a", "#b09a20")}</g>`)}<span>_model1.prt</span>${ic(11, 12, svg`<path d="M1 1h6l3 3v7H1z" fill="none" stroke="#fff" stroke-width="1.5"/><path d="M5 6h6" stroke="#fff" stroke-width="1.5"/>`)}<b>✕</b></div></div>
          <div class="tline"></div>
          ${this.scene()}
        </div>
        <div class="gutter"></div>
        <div class="nav">
          <div class="navh"><span>资源管理器 - 程序顺序</span><div class="sq"></div>${ic(13, 13, svg`<path d="M1 1l11 11M12 1L1 12" stroke="#111" stroke-width="1.8"/>`)}</div>
          <div class="tbl">${this.tree()}</div>
          <div class="hs"><div class="lt"></div><div class="thumb"></div><div class="rt"></div></div>
          <div class="hbar"></div>
        </div>
        <div class="rail">
          ${rail.map((r) => html`<div class="rc2">${r}</div>`)}
          <div class="rline"></div>
          <div class="rarrow"><div class="lt"></div></div>
        </div>
      </div>

      <div class="status">
        <span class="l">指定参数</span>
        <span><b>当前 : FIXED_CONTOUR</b></span>
        ${ic(16, 16, svg`<path d="M0 4V0h4M12 0h4v4M16 12v4h-4M4 16H0v-4" fill="none" stroke="#aaa"/><rect x="3" y="3" width="10" height="10" fill="#fff" stroke="#333"/><rect x="5" y="5" width="6" height="6" fill="#5a8ad0"/>`)}
      </div>
      <div class="task">
        <div class="orb"></div><div class="tdot"></div><div class="tk"></div>
        <div class="tb"><i style="background:#d84a5a"></i></div>
        <div class="tb"><i style="background:#e8d890"></i></div>
        <div class="tb"><i style="background:#2a88d8"></i></div>
        <div class="tb"><i style="background:#6a5a4a"></i></div>
        <div class="clock"></div>
        <div class="desk"></div>
      </div>

      ${this.dialog()}
      ${this.overlay()}
    `;
  }
}
